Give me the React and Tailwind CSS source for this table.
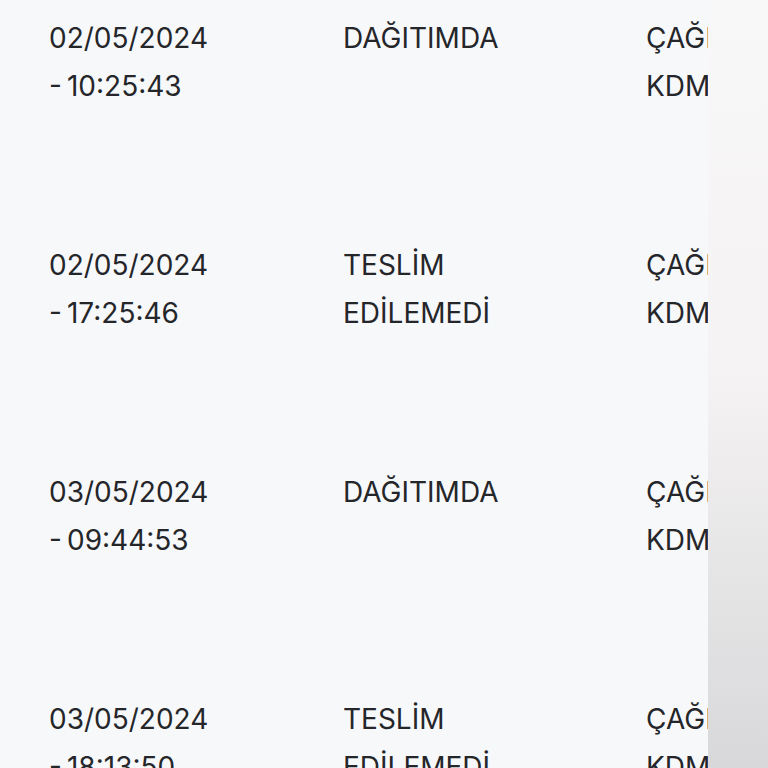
import React from "react";

const rows = [
  { date: "02/05/2024", time: "-\u200910:25:43", status: ["DAĞITIMDA"], unit: ["ÇAĞLAYAN", "KDM"] },
  { date: "02/05/2024", time: "-\u200917:25:46", status: ["TESLİM", "EDİLEMEDİ"], unit: ["ÇAĞLAYAN", "KDM"] },
  { date: "03/05/2024", time: "-\u200909:44:53", status: ["DAĞITIMDA"], unit: ["ÇAĞLAYAN", "KDM"] },
  { date: "03/05/2024", time: "-\u200918:13:50", status: ["TESLİM", "EDİLEMEDİ"], unit: ["ÇAĞLAYAN", "KDM"] },
];

const App = () => {
  return (
    <div className="flex h-[768px] w-[768px] overflow-hidden bg-[#f7f8fa] font-['Inter',sans-serif] text-[28px] leading-[48px] text-[#25262a]">
      <div className="w-[708px] shrink-0 overflow-hidden pt-[14px]">
        {rows.map((row, i) => (
          <div key={i} className="flex h-[227px] pl-[49px] whitespace-nowrap">
            <div className="w-[294px] shrink-0">
              <div>{row.date}</div>
              <div>{row.time}</div>
            </div>
            <div className="w-[303px] shrink-0">
              {row.status.map((s) => (
                <div key={s}>{s}</div>
              ))}
            </div>
            <div>
              {row.unit.map((u) => (
                <div key={u}>{u}</div>
              ))}
            </div>
          </div>
        ))}
      </div>
      <div className="flex-1 bg-gradient-to-b from-[#f9f8f8] via-[#f4f2f2] to-[#d8d8da]" />
    </div>
  );
};

export default App;
